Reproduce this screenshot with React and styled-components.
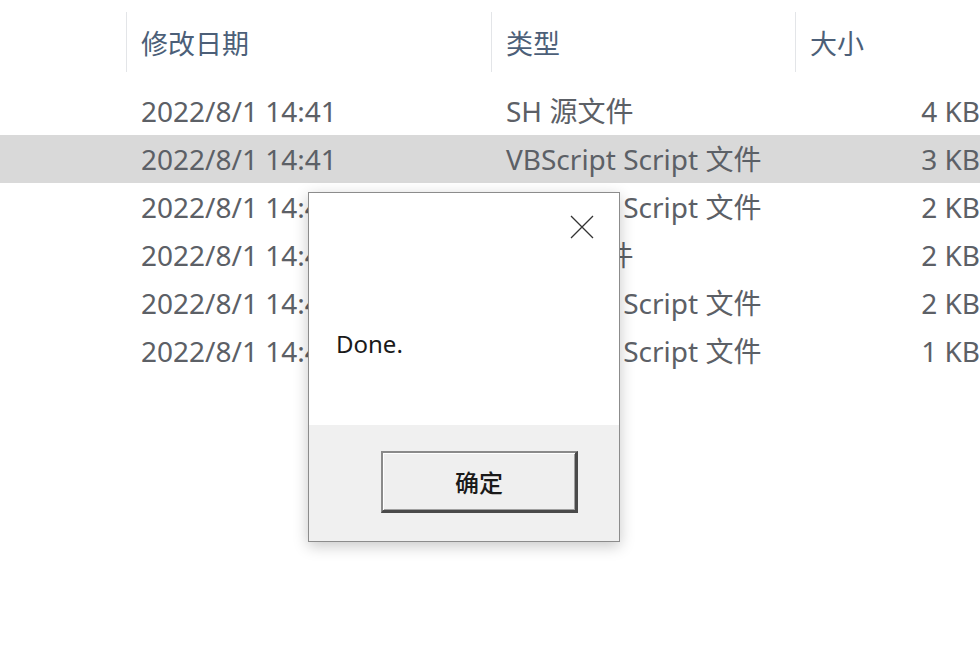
import React from 'react'
import styled, { createGlobalStyle } from 'styled-components'

const GlobalStyle = createGlobalStyle`
  html, body {
    margin: 0;
    padding: 0;
    background: #ffffff;
    overflow: hidden;
  }
  body {
    font-family: "Noto Sans", "Noto Sans CJK SC", sans-serif;
  }
`;

const Page = styled.div`
  position: relative;
  width: 980px;
  height: 661px;
  overflow: hidden;
  background: #ffffff;
`;

const List = styled.div`
  width: 1000px;
  padding-top: 12px;
  display: flex;
  flex-direction: column;
`;

const HeaderRow = styled.div`
  display: grid;
  grid-template-columns: 126px 365px 304px 1fr;
  height: 60px;
  margin-bottom: 15px;
`;

const HeaderCell = styled.div`
  display: flex;
  align-items: center;
  padding-left: 14px;
  border-left: ${({ $blank }) => ($blank ? 'none' : '1px solid #e3e5e8')};
  font-size: 27px;
  color: #4c5f78;
  font-family: "Noto Sans CJK SC", sans-serif;
`;

const Row = styled.div`
  display: grid;
  grid-template-columns: 126px 365px 304px 1fr;
  height: 48px;
  align-items: center;
  background: ${({ $selected }) => ($selected ? '#d9d9d9' : 'transparent')};
`;

const Cell = styled.div`
  padding-left: 15px;
  font-size: 28px;
  line-height: 48px;
  color: #5c6066;
  white-space: nowrap;
  font-family: "Noto Sans", "Noto Sans CJK SC", sans-serif;
`;

const SizeCell = styled(Cell)`
  text-align: right;
  padding-right: 20px;
`;

const Dialog = styled.div`
  position: absolute;
  left: 308px;
  top: 192px;
  width: 310px;
  height: 348px;
  border: 1px solid #8c8c8c;
  background: #f0f0f0;
  display: flex;
  flex-direction: column;
  box-shadow: 0 4px 14px rgba(0, 0, 0, 0.22);
`;

const DialogBody = styled.div`
  height: 232px;
  background: #ffffff;
  display: flex;
  flex-direction: column;
`;

const TitleBar = styled.div`
  display: flex;
  justify-content: flex-end;
  padding: 22px 25px 0 0;
`;

const CloseIcon = styled.svg`
  width: 24px;
  height: 24px;
  display: block;
`;

const Message = styled.div`
  margin: 88px 0 0 27px;
  font-size: 24px;
  color: #1a1a1a;
  font-family: "Noto Sans", sans-serif;
`;

const Footer = styled.div`
  flex: 1;
  display: flex;
  justify-content: flex-start;
  padding: 26px 0 0 72px;
`;

const Button = styled.button`
  width: 197px;
  height: 62px;
  box-sizing: border-box;
  background: #efefef;
  border-top: 2px solid #8a8a8a;
  border-left: 2px solid #8a8a8a;
  border-right: 3px solid #4a4a4a;
  border-bottom: 3px solid #4a4a4a;
  box-shadow: inset 1px 1px 0 #ffffff, inset -1px -1px 0 #a0a0a0;
  font-size: 24px;
  color: #1a1a1a;
  font-family: "Noto Sans CJK SC", sans-serif;
  font-weight: 500;
  padding: 0;
`;

const files = [
  { date: '2022/8/1 14:41', type: 'SH 源文件', size: '4 KB' },
  { date: '2022/8/1 14:41', type: 'VBScript Script 文件', size: '3 KB', selected: true },
  { date: '2022/8/1 14:41', type: 'VBScript Script 文件', size: '2 KB' },
  { date: '2022/8/1 14:41', type: 'SH 源文件', size: '2 KB' },
  { date: '2022/8/1 14:41', type: 'VBScript Script 文件', size: '2 KB' },
  { date: '2022/8/1 14:41', type: 'VBScript Script 文件', size: '1 KB' },
];

const App = () => {
  return (
    <Page>
      <GlobalStyle />
      <List>
        <HeaderRow>
          <HeaderCell $blank />
          <HeaderCell>修改日期</HeaderCell>
          <HeaderCell>类型</HeaderCell>
          <HeaderCell>大小</HeaderCell>
        </HeaderRow>
        {files.map((f, i) => (
          <Row key={i} $selected={f.selected}>
            <div />
            <Cell>{f.date}</Cell>
            <Cell>{f.type}</Cell>
            <SizeCell>{f.size}</SizeCell>
          </Row>
        ))}
      </List>
      <Dialog>
        <DialogBody>
          <TitleBar>
            <CloseIcon viewBox="0 0 24 24">
              <path d="M1 1 L23 23 M23 1 L1 23" stroke="#333" strokeWidth="1.3" fill="none" />
            </CloseIcon>
          </TitleBar>
          <Message>Done.</Message>
        </DialogBody>
        <Footer>
          <Button>确定</Button>
        </Footer>
      </Dialog>
    </Page>
  )
}

export default App
